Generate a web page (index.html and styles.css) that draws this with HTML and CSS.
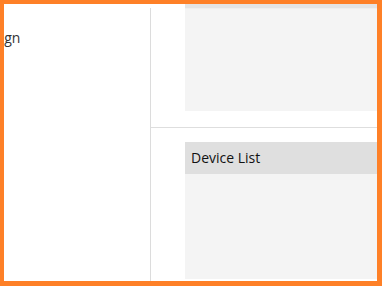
FILE: index.html
```html
<!DOCTYPE html>
<html>
<head>
<meta charset="utf-8">
<link rel="stylesheet" href="styles.css">
</head>
<body>
<div class="frame">
  <aside class="sidebar">
    <div class="sidebar-title">Design</div>
  </aside>
  <main class="main">
    <section class="section section-top">
      <div class="panel panel-top">
        <div class="panel-strip"></div>
        <div class="panel-body"></div>
      </div>
    </section>
    <section class="section section-bottom">
      <div class="panel">
        <div class="panel-header">Device List</div>
        <div class="panel-body"></div>
      </div>
    </section>
  </main>
</div>
</body>
</html>
```
FILE: styles.css
```css
html, body {
  margin: 0;
  padding: 0;
  width: 382px;
  height: 286px;
  overflow: hidden;
}
body {
  font-family: "Open Sans", "Noto Sans", sans-serif;
  color: #333;
}
.frame {
  box-sizing: border-box;
  width: 382px;
  height: 286px;
  display: flex;
  border-style: solid;
  border-color: #fe8027;
  border-width: 4px 5px 5px 4px;
  background: #fff;
  overflow: hidden;
}
.sidebar {
  flex: none;
  width: 146px;
  margin-top: 4px;
  border-right: 1px solid #dcdcdc;
  overflow: hidden;
}
.sidebar-title {
  font-size: 14px;
  line-height: 19px;
  padding-top: 20px;
  margin-left: -28px;
  white-space: nowrap;
}
.main {
  flex: 1;
  min-width: 0;
  display: flex;
  flex-direction: column;
}
.section {
  box-sizing: border-box;
  padding-left: 34px;
  display: flex;
  flex-direction: column;
}
.section-top {
  flex: none;
  height: 124px;
  border-bottom: 1px solid #dedede;
  padding-bottom: 16px;
}
.section-bottom {
  flex: 1;
  padding-top: 14px;
  padding-bottom: 2px;
}
.panel {
  flex: 1;
  display: flex;
  flex-direction: column;
  background: #f4f4f4;
}
.panel-strip {
  height: 4px;
  background: #e4e4e4;
  border-bottom: 1px solid #efefef;
}
.panel-body {
  flex: 1;
  background: #f4f4f4;
}
.panel-header {
  height: 32px;
  box-sizing: border-box;
  background: #dfdfdf;
  color: #111;
  font-size: 14px;
  line-height: 19px;
  padding: 6px 0 0 6px;
}
```
